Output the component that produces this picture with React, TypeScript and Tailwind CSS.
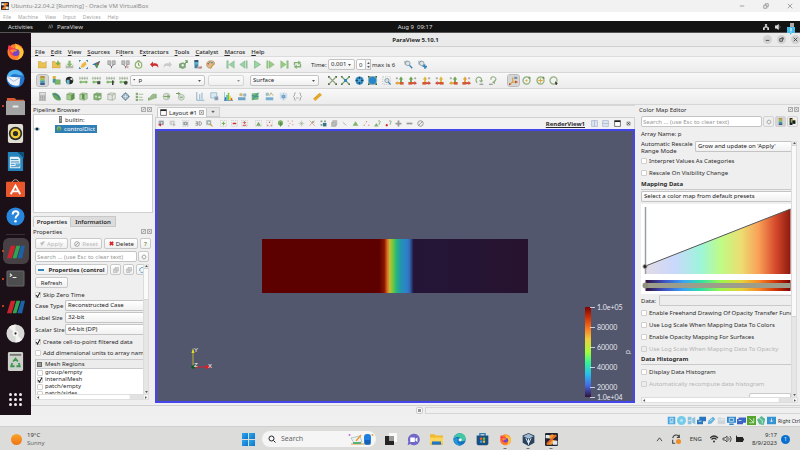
import type { ReactNode } from "react";
import { clsx } from "clsx";

/* ---------- toolbar glyphs, all on a 12 x 12 grid ---------- */

const axisArrow = (up: string, side: string, flip: boolean) => (
  <g transform={flip ? "translate(12 0) scale(-1 1)" : undefined}>
    <path d="M1 3h3M2.500 1.500v3" stroke="#777" strokeWidth=".7" />
    <path d="M8 9V4" stroke={up} strokeWidth="2.500" />
    <path d="M5 4.500h6L8 .5z" fill={up} />
    <path d="M8 9.500H3" stroke={side} strokeWidth="2.500" />
    <path d="M3.500 6.500V12L0 9.500z" fill={side} />
    <path d="M6.500 8h5v3.500h-5z" fill="#d3572f" />
  </g>
);

const cube = (fill: string, extra?: ReactNode) => (
  <>
    <path d="M1 3l4-2 6 1v7l-4 2-6-1z" fill={fill} stroke="#6f8a64" strokeWidth=".6" />
    <path d="M1 3l6 1v7M7 4l4-2" fill="none" stroke="#6f8a64" strokeWidth=".6" />
    {extra}
  </>
);

const rangeRuler = (extra?: ReactNode) => (
  <>
    <path d="M1 1v4M4.300 1v4M7.600 1v4M11 1v4M1 3h10" stroke="#8ea382" strokeWidth=".9" />
    <path d="M0 8l3-2.500V7h6V5.500L12 8l-3 2.500V9H3v1.500z" fill="#79b35f" />
    {extra}
  </>
);

const dashedBox = <path d="M1 1h10v10H1z" fill="none" stroke="#999" strokeWidth=".7" strokeDasharray="1.500 1.500" />;

const magnifier = (
  <>
    <path d="M0 1h5v5H0z" fill="#b9c6cf" />
    <circle cx="5" cy="4.500" r="3" fill="#dbe6ec" stroke="#7c8a92" />
    <path d="M7.300 7L11 11" stroke="#3486bd" strokeWidth="1.800" />
  </>
);

const glyphs: Record<string, ReactNode> = {
  open: <path d="M0 2h4l1 1.500h5l1-2v9H0z" fill="#eac254" stroke="#b98a2c" strokeWidth=".5" />,
  openState: (
    <>
      <path d="M0 2h4l1 1.500h6v7H0z" fill="#eac254" stroke="#b98a2c" strokeWidth=".5" />
      <path d="M7 1h2v3h2L8 7.500 5 4h2z" fill="#6fae51" />
    </>
  ),
  save: (
    <>
      <path d="M1 6v5h10V6l-2 2H3z" fill="#b2b9ae" />
      <path d="M4.500 1h3v4H10L6 9 2 5h2.500z" fill="#83b86b" />
    </>
  ),
  extract: (
    <>
      <path d="M0 0h3L0 3zM12 0v3L9 0zM0 12V9l3 3zM12 12H9l3-3z" fill="#3a84b8" />
      <path d="M2 10l2-5 5-3 1 4-4 4z" fill="#eeb83f" />
    </>
  ),
  catalyst: (
    <>
      <path d="M0 6l11-5-5 10-2-4z" fill="#3774a3" />
      <path d="M4 7l7-6-4 10z" fill="#4d9a52" />
      <path d="M6 5l4-3-2 5z" fill="#c03b3b" />
    </>
  ),
  connect: (
    <>
      <path d="M1 1h4v5H1zM7 1h4v5H7z" fill="#bdbdbd" stroke="#888" strokeWidth=".7" />
      <path d="M3 6l3 3 3-3M6 8v3" stroke="#6d6d6d" fill="none" strokeWidth="1.300" />
    </>
  ),
  disconnect: (
    <>
      <path d="M1 1h4v5H1zM7 1h4v5H7z" fill="#bdbdbd" stroke="#888" strokeWidth=".7" />
      <path d="M3 6l3 3 3-3M6 8v3" stroke="#858585" fill="none" strokeWidth="1.300" />
      <path d="M7 8l3 3M10 8l-3 3" stroke="#c77" />
    </>
  ),
  clock: (
    <>
      <circle cx="6" cy="6.500" r="4.300" fill="#f5f5ee" stroke="#90b874" strokeWidth="1.700" />
      <path d="M6 4v3h2M4.500 1h3" stroke="#6e7c58" fill="none" />
    </>
  ),
  undo: <path d="M0 6l4-4v2.500c5-1 8 1 7 6-1-3-3-3.500-7-2.500v2z" fill="#cf2f2f" />,
  redo: <path d="M12 6L8 2v2.500c-5-1-8 1-7 6 1-3 3-3.500 7-2.500v2z" fill="#c9c9c9" />,
  findData: (
    <>
      <path d="M0 5l5-2 4 2v5l-4 2-5-2z" fill="#7fa77a" />
      <path d="M7 6l4-5M8 1h3v3" stroke="#6da062" strokeWidth="1.500" fill="none" />
      <circle cx="5" cy="7" r="1.600" fill="#e8efe4" />
    </>
  ),
  colorTable: (
    <>
      <path d="M2 0h5v11H2z" fill="#4b7da0" />
      <path d="M2 0h5v3H2z" fill="#3d5570" />
      <path d="M2 3h5v3H2z" fill="#57b8c9" />
      <path d="M6 8h6v4H6z" fill="#c8c8c8" />
      <path d="M7 9l2 2 3-2" stroke="#cc4242" fill="none" />
    </>
  ),
  palette: (
    <>
      <path d="M6 1c8 0 6 6 3 6-2 0 0 4-3 4C-1 11-1 1 6 1z" fill="#dcb88c" stroke="#98703f" strokeWidth=".6" />
      <circle cx="3" cy="5" r="1" fill="#c33" />
      <circle cx="5" cy="3" r="1" fill="#3a7" />
      <circle cx="8" cy="3.500" r="1" fill="#37a" />
      <path d="M6 11l5-7" stroke="#d39b2a" strokeWidth="1.300" />
    </>
  ),
  first: <path d="M1 1h2v10H1zM11 1v10L4 6z" fill="#9ccfa5" stroke="#6faa7c" strokeWidth=".5" />,
  previous: <path d="M8 1v10L1 6zM9.500 1H11v10H9.500z" fill="#9ccfa5" stroke="#6faa7c" strokeWidth=".5" />,
  play: <path d="M2 1v10l8-5z" fill="#9bd6a2" stroke="#6aac77" strokeWidth=".8" />,
  next: <path d="M4 1v10l7-5zM1 1h1.500v10H1z" fill="#97cb86" stroke="#6ba75d" strokeWidth=".5" />,
  last: <path d="M9 1h2v10H9zM1 1v10l7-5z" fill="#97cb86" stroke="#6ba75d" strokeWidth=".5" />,
  loop: (
    <>
      <path d="M2 7V3.500h6M10 5v4H4" fill="none" stroke="#82b173" strokeWidth="1.800" />
      <path d="M7 .5v6l4-3zM5 6v6L1 9z" fill="#82b173" />
    </>
  ),
  zoomIn: magnifier,
  zoomAdd: (
    <>
      {magnifier}
      <path d="M9 5.500v6M6 8.500h6" stroke="#3486bd" strokeWidth="1.600" />
    </>
  ),
  scalarBar: (
    <>
      <path d="M3 0h6v3H3z" fill="#b98f3a" />
      <path d="M3 3h6v3H3z" fill="#a6bd4b" />
      <path d="M3 6h6v3H3z" fill="#3ea0ad" />
      <path d="M3 9h6v3H3z" fill="#3b5a92" />
    </>
  ),
  editColors: (
    <>
      <path d="M1 0h4v4H1z" fill="#d8b23c" />
      <path d="M1 4h4v5H1z" fill="#3f93b8" />
      <path d="M4 5h7v6H4z" fill="#7fb56c" stroke="#5b8a4c" strokeWidth=".5" />
    </>
  ),
  separateColors: (
    <>
      <circle cx="6" cy="6" r="5" fill="#252525" />
      <path d="M2 5h4v6H2z" fill="#67b9c5" />
      <path d="M6 4l4-2v4z" fill="#e9e9e9" />
    </>
  ),
  legendDark: (
    <>
      <path d="M1 0h5v12H1z" fill="#222" />
      <path d="M3 2h4v3H3z" fill="#e0aa37" />
      <path d="M3 5h4v3H3z" fill="#5ab46c" />
      <path d="M6 4h5v6H6z" fill="#161616" />
    </>
  ),
  rescale: rangeRuler(),
  rescaleCustom: rangeRuler(<path d="M7 7h4v4H7z" fill="#4a4a4a" />),
  rescaleTime: rangeRuler(<path d="M8 6h2v6H8z" fill="#404040" />),
  rescaleVisible: rangeRuler(<circle cx="9" cy="9" r="2.500" fill="#3e4b3c" />),
  resetCamera: (
    <>
      <path d="M1 1l10 10M11 1L1 11" stroke="#8fa580" strokeWidth="1.500" />
      <path d="M0 0h3L0 3zM12 0v3L9 0zM0 12V9l3 3zM12 12H9l3-3z" fill="#586b4d" />
    </>
  ),
  zoomToData: (
    <>
      <path d="M1 1l10 10M11 1L1 11" stroke="#79a663" strokeWidth="1.500" />
      <path d="M4 4h4v4H4z" fill="#2f87bd" />
      <path d="M0 0h2v2H0zM10 0h2v2h-2zM0 10h2v2H0zM10 10h2v2h-2z" fill="#586b4d" />
    </>
  ),
  closest: (
    <>
      <circle cx="6" cy="6" r="5.500" fill="#2e84b9" />
      <path d="M1 6h10M6 1v10" stroke="#16425f" strokeWidth="1.200" />
      <path d="M4 4h4v4H4z" fill="#57a4cf" />
    </>
  ),
  closestData: (
    <>
      <path d="M0 0h12v12H0z" fill="#a9b8aa" />
      <circle cx="6" cy="6" r="5" fill="#2586cb" />
      <path d="M0 0h2v2H0zM10 0h2v2h-2zM0 10h2v2H0zM10 10h2v2h-2z" fill="#3c5a41" />
    </>
  ),
  zoomBox: (
    <>
      {dashedBox}
      <circle cx="6.500" cy="6" r="2.800" fill="#cfe0ea" stroke="#7e909b" />
      <path d="M8.500 8l3 3.500" stroke="#3486bd" strokeWidth="1.600" />
    </>
  ),
  plusX: axisArrow("#6da552", "#dfa33d", false),
  minusX: axisArrow("#6da552", "#cf4b35", true),
  plusY: axisArrow("#dfb63d", "#cf4b35", true),
  minusY: axisArrow("#dfb63d", "#cf4b35", false),
  plusZ: axisArrow("#6da552", "#dfa33d", false),
  minusZ: axisArrow("#dfa33d", "#cf4b35", true),
  rotateCw: (
    <>
      <path d="M3 9C-1 5 3 0 7 2c2 1 2 3 1.500 5" fill="none" stroke="#8fae80" strokeWidth="1.500" />
      <path d="M5 6l3.500 3L11 5.500z" fill="#8fae80" />
      <path d="M6 11h5" stroke="#777" strokeWidth="1.200" />
    </>
  ),
  rotateCcw: (
    <>
      <path d="M3 5C1 2 6-1 9 3c1 3-1 4-3 5" fill="none" stroke="#8fae80" strokeWidth="1.500" />
      <path d="M8 5.500v5L4 8.500z" fill="#8fae80" />
      <path d="M0 11h5" stroke="#777" strokeWidth="1.200" />
    </>
  ),
  showAxes: (
    <>
      <path d="M5 9V2M5 8h6M5 8l-4 3" stroke="#d5a031" strokeWidth="1.500" />
      <path d="M8 6l4 2-4 2z" fill="#c84b3b" />
      <path d="M7 1h4v3H7z" fill="#7d8cab" />
      <path d="M0 9l3 3H0z" fill="#c84b3b" />
    </>
  ),
  centerShow: (
    <>
      <circle cx="6" cy="6" r="4.700" fill="none" stroke="#8fb07c" strokeWidth="1.700" />
      <circle cx="6" cy="6" r="1.500" fill="#d6b04b" />
      <path d="M9 0l3 3-3 1z" fill="#6b9257" />
    </>
  ),
  centerReset: (
    <>
      <circle cx="6" cy="6" r="4.700" fill="none" stroke="#8fb07c" strokeWidth="1.700" />
      <path d="M6 3v6M3 6h6" stroke="#dfaa3a" strokeWidth="1.600" />
      <path d="M9 0l3 3-3 1z" fill="#6b9257" />
    </>
  ),
  centerPick: (
    <>
      <circle cx="6" cy="6" r="4.700" fill="none" stroke="#8fb07c" strokeWidth="1.700" />
      <path d="M8 7l4 3-2 .3.500 1.700H9z" fill="#222" />
    </>
  ),
  calculator: (
    <>
      <path d="M2 0h8v12H2z" fill="#c3c3c3" stroke="#9c9c9c" strokeWidth=".6" />
      <path d="M3 1.500h6v2H3z" fill="#e4e9e4" />
      <path d="M3.500 5v6M6 5v6M8.500 5v6" stroke="#8a8a8a" strokeDasharray="1.200 .8" />
    </>
  ),
  contour: (
    <>
      <path d="M0 2c3-3 11 0 12 8-1 3-10 2-12-8z" fill="#6aa75e" />
      <path d="M2 3c4 0 7 3 8 6" fill="none" stroke="#417aa6" strokeWidth="1.600" />
    </>
  ),
  clip: cube("#a3cb8c", <path d="M7 4l4-2v7l-4 2z" fill="#5d924f" />),
  slice: cube("#b5d3a5", <path d="M4 2l3 1v7l-3-1z" fill="#5b9853" />),
  threshold: cube("#83b573", <path d="M3 5h2v2H3zM7 6h3v2H7z" fill="#e9f1e4" />),
  extractSubset: cube("#e4e4e4"),
  glyph: (
    <>
      <circle cx="6" cy="6" r="4" fill="#9fb8c7" stroke="#75909f" />
      <path d="M6 0l2 2.500H4zM6 12l2-2.500H4zM0 6l2.500-2v4zM12 6L9.500 4v4z" fill="#6b8799" />
      <path d="M6 3v6M3 6h6" stroke="#dce8ee" />
    </>
  ),
  streamTracer: (
    <>
      <path d="M1 1h3v3H1zM1 5h3v3H1zM1 9h3v3H1z" fill="#86ab76" />
      <path d="M5 3h6M5 7h5M5 10.500h6" stroke="#a9c19e" strokeWidth="1.500" />
    </>
  ),
  warp: <path d="M0 8c4 1 3-4 7-5h4v5c-4 0-5 2-11 3z" fill="#9dbc8e" stroke="#6f9660" strokeWidth=".7" />,
  group: (
    <>
      <circle cx="6" cy="6" r="4.500" fill="#d9e0d6" stroke="#a7b5a1" />
      <path d="M2 6h8M7 4l3 2-3 2" stroke="#7ba368" fill="none" strokeWidth="1.300" />
    </>
  ),
  extractLevel: (
    <>
      <circle cx="7" cy="7" r="4" fill="#d9e0d6" stroke="#a7b5a1" />
      <path d="M0 2h5M3 0l2 2-2 2M5 7h4" stroke="#6d9a59" fill="none" strokeWidth="1.200" />
    </>
  ),
  plotLine: <path d="M1 0v11h10M5 3v7M8 1v9" fill="none" stroke="#7ba5c6" strokeWidth="1.100" />,
  plotSelection: (
    <>
      <path d="M1 1h8v7H1z" fill="#dbe9f1" stroke="#7ca3bc" strokeWidth=".8" />
      <path d="M6 6h5v5H6z" fill="#7ea9c4" />
      <path d="M8 10l2-3" stroke="#d56" />
    </>
  ),
  histogram: (
    <>
      <path d="M0 12V0M0 11.500h12" stroke="#3974a8" />
      <path d="M1 7h2v4H1z" fill="#3468c9" />
      <path d="M3 4h2v7H3z" fill="#34b5b0" />
      <path d="M5 1h2v10H5z" fill="#7fc73c" />
      <path d="M7 5h2v6H7z" fill="#f1d52e" />
      <path d="M9 8h2v3H9z" fill="#e2602d" />
    </>
  ),
  inspect: (
    <>
      <path d="M0 7h10v4H0z" fill="#6fa3c4" />
      <circle cx="4" cy="3.500" r="2.300" fill="#cdbb74" />
      <path d="M7 2h4v4H7z" fill="#8db2c7" />
    </>
  ),
  probe: (
    <>
      <path d="M1 2l9-1v9l-9 1z" fill="#6fb878" />
      <path d="M2 10l8-9M1 5l9 1" stroke="#2b7fa8" />
    </>
  ),
  sample: (
    <>
      <path d="M1 7h10v4H1z" fill="#77b0ce" />
      <path d="M1 1h4v4H1z" fill="#9bb" />
      <path d="M6 5l2-4 3 4" stroke="#b99a59" fill="none" />
    </>
  ),
  ambient: (
    <>
      <path d="M1 1h10v7l-5 4-5-4z" fill="#d7e4ee" />
      <circle cx="6" cy="6" r="2.500" fill="#5d96c1" />
      <path d="M6 1v10M2 4l8 4M10 4L2 8" stroke="#8eb4d0" strokeWidth=".7" />
    </>
  ),
  braces: (
    <path d="M3.500 1C1 1 3 5 .5 6 3 7 1 11 3.500 11M8.500 1c2.500 0 .5 4 3 5-2.500 1-.5 5-3 5M4 8h1M5.700 8h1M7.300 8h1" fill="none" stroke="#858585" />
  ),
  ruler: (
    <>
      <path d="M0 9l9-8 3 3-9 8z" fill="#e5aa2c" />
      <path d="M3 7l1 1M5 5l1 1M7 3l1 1" stroke="#8b641b" strokeWidth=".7" />
    </>
  ),
  camUndo: (
    <>
      <path d="M1 1h9v8H1z" fill="#a8adb5" />
      <circle cx="6" cy="5" r="2.500" fill="#d6e0e6" stroke="#66727a" />
      <path d="M0 8l5-2v5z" fill="#d02c2c" />
    </>
  ),
  camRedo: (
    <>
      <path d="M1 1h9v8H1z" fill="#d3d3d3" />
      <circle cx="6" cy="5" r="2.500" fill="#eee" stroke="#aaa" />
      <path d="M12 8L7 6v5z" fill="#b9b9b9" />
    </>
  ),
  camera: (
    <>
      {dashedBox}
      <path d="M2 3h8v6H2z" fill="#a3abae" />
      <circle cx="6" cy="6" r="2" fill="#e2e8ea" stroke="#68757c" />
    </>
  ),
  threeD: <path d="M1 3h3.500v6H1M1 6h3M7 3v6h2.500L11 7V5L9.500 3z" fill="none" stroke="#777" strokeWidth="1.200" />,
  zoomView: (
    <>
      <path d="M0 0h9v9H0z" fill="#bfcace" />
      <circle cx="5" cy="4.500" r="3" fill="#e0e6e2" stroke="#75857c" />
      <path d="M7 7l4 4" stroke="#c8962a" strokeWidth="1.800" />
    </>
  ),
  selAdd: (
    <>
      {dashedBox}
      <path d="M6 3v6M3 6h6" stroke="#74b45a" strokeWidth="2" />
    </>
  ),
  selRemove: (
    <>
      {dashedBox}
      <path d="M3 6h6" stroke="#d22f2f" strokeWidth="2.500" />
    </>
  ),
  selToggle: (
    <>
      {dashedBox}
      <path d="M6 2v5M3 4.500h6" stroke="#b3684e" strokeWidth="1.500" />
      <path d="M3 9h6" stroke="#d22f2f" strokeWidth="1.500" />
    </>
  ),
  cells: (
    <>
      {dashedBox}
      <path d="M2 10l4-7 4 7z" fill="#78a865" />
    </>
  ),
  points: (
    <>
      {dashedBox}
      <path d="M5 3h2v2H5zM2 8h2v2H2zM8 8h2v2H8z" fill="#c65b4a" />
    </>
  ),
  polyCells: (
    <>
      <circle cx="6" cy="5" r="4.500" fill="#7fb566" />
      <path d="M4 6l2-3 3 4-3 5z" fill="#5a9146" />
    </>
  ),
  polyPoints: <path d="M1 1h2v2H1zM8 1h2v2H8zM4 5h2v2H4zM9 7h2v2H9zM2 9h2v2H2z" fill="#d9a29a" />,
  frustum: <path d="M6 1v10M1 6h10M3 3l6 6M9 3L3 9" stroke="#a5b79b" />,
  blocks: (
    <>
      <path d="M1 1l9 9M9 1L1 10" stroke="#c2796b" />
      <path d="M5 2h4v3H5z" fill="#9eb48e" />
    </>
  ),
  blocksBlue: (
    <>
      <path d="M1 1h3v3H1zM7 1h3v3H7zM1 7h3v3H1z" fill="#7c9b8b" />
      <path d="M5 5h6v6H5z" fill="#3b718c" />
    </>
  ),
  interactive: <path d="M3 1h7v8H3zM1 4h7v7H1z" fill="#c6c6c6" stroke="#8f8f8f" strokeWidth=".7" />,
  hoverLine: <path d="M3 4l6 5" stroke="#aaa" strokeWidth="1.500" />,
  hoverCell: <path d="M1 10l5-8 5 8z" fill="#83b36f" />,
  hoverPoint: <path d="M5 2h2v2H5zM1 8h2v2H1zM9 8h2v2H9zM4 6h1v1H4z" fill="#cf7564" />,
  queryCell: (
    <>
      <path d="M0 11l4-6 4 6z" fill="#83b36f" />
      <path d="M7 2c4-2 5 2 2 3v3" fill="none" stroke="#83a06f" strokeWidth="1.500" />
    </>
  ),
  queryPoint: (
    <>
      <circle cx="3" cy="9" r="2" fill="#d12f2f" />
      <path d="M7 2c4-2 5 2 2 3v3" fill="none" stroke="#83a06f" strokeWidth="1.500" />
    </>
  ),
  grow: <path d="M6 1v10M1 6h10" stroke="#9a9a9a" strokeWidth="3" />,
  shrink: <path d="M1 6h10" stroke="#9a9a9a" strokeWidth="3" />,
  forbid: (
    <>
      <circle cx="6" cy="6" r="4.700" fill="none" stroke="#8e8e8e" strokeWidth="1.500" />
      <path d="M9 3L3 9" stroke="#8e8e8e" strokeWidth="1.500" />
    </>
  ),
  splitH: <path d="M1 1h10v10H1zM6 1v10" fill="#dde5f0" stroke="#9aa9c2" />,
  splitV: <path d="M1 1h10v10H1zM1 6h10" fill="#dde5f0" stroke="#9aa9c2" />,
  maximize: (
    <>
      <path d="M1 1h10v10H1z" fill="#fff" stroke="#222" />
      <path d="M1 1h10v2.500H1z" fill="#222" />
    </>
  ),
  close: (
    <>
      <circle cx="6" cy="6" r="4.500" fill="#c2c2c2" />
      <path d="M4 4l4 4M8 4L4 8" stroke="#444" strokeWidth="1.300" />
    </>
  ),
  dockFloat: <path d="M1 1h10v10H1zM3.500 8.500l5-5" fill="#e5e5e5" stroke="#777" strokeWidth="1.400" />,
  dockClose: <path d="M1 1h10v10H1zM4 4l4 4M8 4L4 8" fill="#e5e5e5" stroke="#777" strokeWidth="1.400" />,
  gear: (
    <>
      <circle cx="6" cy="6" r="3.500" fill="none" stroke="#b5b5b5" strokeWidth="2" />
      <path d="M6 0v12M0 6h12M2 2l8 8M10 2l-8 8" stroke="#b5b5b5" strokeDasharray="2 8" />
    </>
  ),
  copy: <path d="M4 1h7v7H4zM1 4h7v7H1z" fill="#ddd" stroke="#a5a5a5" />,
  reload: <path d="M9 2C4-1 0 4 2 8M3 10c5 3 9-2 7-6" fill="none" stroke="#4a97c5" strokeWidth="2" />,
};

function Glyph({ name, className = "size-[9px]" }: { name: string; className?: string }) {
  return (
    <svg viewBox="0 0 12 12" className={clsx("block shrink-0", className)} aria-hidden="true">
      {glyphs[name]}
    </svg>
  );
}

type ToolGroupProps = { names: string[]; className: string; pressed?: string; small?: boolean };

function ToolGroup({ names, className, pressed, small }: ToolGroupProps) {
  return (
    <div className={clsx("flex shrink-0 items-center justify-between", className)}>
      {names.map((name) => (
        <button
          key={name}
          aria-label={name}
          className={clsx(
            "grid h-[11px] w-[11px] place-items-center",
            name === pressed && "rounded-xs bg-[#d6d6d6] outline outline-[#bbb]",
          )}
        >
          <Glyph name={name} className={small ? "size-[7px]" : "size-[9px]"} />
        </button>
      ))}
    </div>
  );
}

/* ---------- form controls ---------- */

function Dropdown({ label, value, className, bare }: { label: string; value: string; className?: string; bare?: boolean }) {
  return (
    <div className={clsx("relative h-[11px]", className)}>
      <select
        aria-label={label}
        className={clsx(
          "block h-full w-full appearance-none border border-[#c4c4c4] bg-linear-to-b from-white to-[#f1f1f1] pl-[2px] text-[6px] leading-[9px] text-[#222]",
          bare ? "rounded-l-xs border-r-0" : "rounded-xs",
        )}
      >
        <option>{value}</option>
      </select>
      {!bare && (
        <svg viewBox="0 0 6 4" className="pointer-events-none absolute top-1/2 right-[4px] h-[2px] w-[3px] -translate-y-1/2">
          <path d="M0 0h6L3 4z" fill="#555" />
        </svg>
      )}
    </div>
  );
}

function Check({ label, checked, disabled, className }: { label: string; checked?: boolean; disabled?: boolean; className?: string }) {
  return (
    <label className={clsx("flex shrink-0 items-center gap-[2px] whitespace-nowrap", disabled && "text-[#b5b5b5]", className)}>
      <span className="relative size-[6px] shrink-0">
        <input
          type="checkbox"
          defaultChecked={checked}
          disabled={disabled}
          className="peer block size-[6px] appearance-none rounded-[1px] border border-[#cfcfcf] bg-white disabled:bg-[#ededed]"
        />
        <svg viewBox="0 0 6 6" className="pointer-events-none absolute inset-0 hidden size-[6px] peer-checked:block">
          <path d="M1 3l1.500 2L5 .5" fill="none" stroke="#222" strokeWidth="1.100" />
        </svg>
      </span>
      {label}
    </label>
  );
}

function PanelHeader({ title }: { title: string }) {
  return (
    <div className="flex h-[9px] shrink-0 items-center justify-between pr-px">
      <h2>{title}</h2>
      <div className="flex gap-px">
        <button aria-label={`Float ${title}`}><Glyph name="dockFloat" className="size-[5px]" /></button>
        <button aria-label={`Close ${title}`}><Glyph name="dockClose" className="size-[5px]" /></button>
      </div>
    </div>
  );
}

function VScroll({ thumb }: { thumb: string }) {
  return (
    <div className="flex w-[6px] shrink-0 flex-col items-center border-x border-[#dcdcdc] bg-[#e6e6e6]">
      <svg viewBox="0 0 4 3" className="my-px h-[2px] w-[3px]"><path d="M0 3h4L2 0z" fill="#555" /></svg>
      <div className={clsx("w-full border-y border-[#d5d5d5] bg-[#fafafa]", thumb)} />
      <svg viewBox="0 0 4 3" className="mt-auto mb-px h-[2px] w-[3px]"><path d="M0 0h4L2 3z" fill="#555" /></svg>
    </div>
  );
}

function HScroll() {
  return (
    <div className="flex h-[6px] shrink-0 items-center gap-px border border-[#dedede] bg-[#f4f4f4] px-px">
      <svg viewBox="0 0 3 4" className="h-[3px] w-[2px]"><path d="M3 0v4L0 2z" fill="#555" /></svg>
      <div className="h-full grow bg-white" />
      <div className="h-full w-[14px] bg-[#e2e2e2]" />
      <svg viewBox="0 0 3 4" className="h-[3px] w-[2px]"><path d="M0 0v4l3-2z" fill="#555" /></svg>
    </div>
  );
}

/* ---------- Ubuntu dock ---------- */

const paraviewMark = (
  <>
    <path d="M5 4h5L6 17H1z" fill="#c9252f" />
    <path d="M11 4h4l-4 13H7z" fill="#2da552" />
    <path d="M16 4h4l-3 13h-5z" fill="#1c62a8" />
  </>
);

const firefoxMark = (
  <>
    <circle cx="10" cy="10.500" r="8.500" fill="#ff7a2f" />
    <path d="M10 1c1 3 8 4 8.500 9 0 6-5 9-8.500 9 6-3 5-9 0-12z" fill="#ffc534" />
    <path d="M2 6l1-3 3 3 4 1c3 1 4 3 3 5-2 4-9 3-9-2z" fill="#f9394f" />
    <circle cx="10.500" cy="11" r="3.700" fill="#7447c9" />
    <path d="M4 9c3-3 5 0 8-1-1 3-4 1-5 4z" fill="#ff8b32" />
  </>
);

const dockTop: { name: string; open?: boolean; art: ReactNode }[] = [
  { name: "Firefox", art: firefoxMark },
  {
    name: "Thunderbird",
    art: (
      <>
        <circle cx="10" cy="10" r="9.500" fill="#2474c9" />
        <path d="M1 8c2-9 14-9 17-1l-5-1c-5-2-8 0-9 3z" fill="#4eb4f2" />
        <path d="M1 8l14 1-1 8c-6 2-13-1-13-9z" fill="#eef3fa" />
        <path d="M1 8l7 5 7-4" fill="none" stroke="#a5b8cf" />
      </>
    ),
  },
  {
    name: "Files",
    open: true,
    art: (
      <>
        <path d="M1 1h8l2 2h8v5H1z" fill="#d85a2c" />
        <path d="M0 4h20v15H0z" fill="#a4a4a4" />
        <path d="M7 9h6v2H7z" fill="#eee" />
      </>
    ),
  },
  {
    name: "Rhythmbox",
    art: (
      <>
        <rect x="2" y="0" width="16" height="20" rx="2" fill="#e2ddd2" />
        <circle cx="10" cy="10" r="7" fill="#2c2c2c" />
        <circle cx="10" cy="10" r="4" fill="none" stroke="#f3cc31" strokeWidth="2.500" />
      </>
    ),
  },
  {
    name: "Writer",
    art: (
      <>
        <path d="M2 0h11l5 5v15H2z" fill="#2684bd" />
        <path d="M12 0h7v7z" fill="#0f4e7b" />
        <path d="M4 5h9l2 2v10H4z" fill="#e9f3f8" />
        <path d="M5 8h8M5 10.500h9M5 13h4M5 15.500h9" stroke="#2b86ba" />
        <path d="M10 12h5v3h-5z" fill="#5fa9d3" />
      </>
    ),
  },
  {
    name: "Software",
    art: (
      <>
        <path d="M6 6c0-7 8-7 8 0" fill="none" stroke="#c4a191" />
        <rect x="0" y="3" width="20" height="16" rx="1" fill="#e9562b" />
        <path d="M5 16l5-9 5 9M6 13h8" fill="none" stroke="#fff" strokeWidth="2" />
      </>
    ),
  },
  {
    name: "Help",
    art: (
      <>
        <circle cx="10" cy="10" r="9.500" fill="#2786dc" />
        <path d="M7 8c0-5 7-4 6-1 0 2-3 2-3 5" fill="none" stroke="#fff" strokeWidth="2" />
        <circle cx="10" cy="15" r="1.300" fill="#fff" />
      </>
    ),
  },
];

const dockBottom: { name: string; open?: boolean; active?: boolean; art: ReactNode }[] = [
  { name: "ParaView", open: true, active: true, art: paraviewMark },
  {
    name: "Terminal",
    open: true,
    art: (
      <>
        <rect x="1" y="2" width="18" height="16" rx="1" fill="#4d4d4d" stroke="#777" strokeWidth=".8" />
        <path d="M4 5l2 1.500L4 8M7 9h4" fill="none" stroke="#eee" strokeWidth="1.100" />
      </>
    ),
  },
  { name: "ParaView window", open: true, art: paraviewMark },
  {
    name: "Disc",
    art: (
      <>
        <circle cx="10" cy="10" r="9.500" fill="#d8d8d6" />
        <path d="M10 10L3 3.500A9.500 9.500 0 0 1 10 .5zM10 10l7 6.500a9.500 9.500 0 0 1-7 3z" fill="#f2f2f0" />
        <circle cx="10" cy="10" r="3" fill="#fafafa" />
        <circle cx="10" cy="10" r="1.200" fill="#333" />
      </>
    ),
  },
  {
    name: "Trash",
    art: (
      <>
        <rect x="2" y="0" width="16" height="20" rx="1.500" fill="#cdd0cb" />
        <path d="M4 2h12v2H4z" fill="#777" />
        <path d="M7.500 10L10 7l2.500 3M13.500 11.500L14.500 15H11M9 15H5.500l1-3.500" fill="none" stroke="#3d9750" strokeWidth="1.900" />
      </>
    ),
  },
];

function DockItem({ name, open, active, art }: { name: string; open?: boolean; active?: boolean; art: ReactNode }) {
  return (
    <button aria-label={name} className="relative grid h-[26px] w-full place-items-center">
      {open && <span className="absolute top-1/2 left-[2px] size-[2px] -translate-y-1/2 rounded-full bg-[#e95420]" />}
      <span className={clsx("grid size-[26px] place-items-center rounded-md", active && "bg-[#474146]")}>
        <svg viewBox="0 0 20 20" className="size-[19px]">{art}</svg>
      </span>
    </button>
  );
}

function Dock() {
  return (
    <nav className="flex w-[31px] shrink-0 flex-col bg-[#1c1018] pt-[5px]">
      <div className="flex h-[191px] flex-col justify-between">
        {dockTop.map((d) => <DockItem key={d.name} {...d} />)}
      </div>
      <div className="mx-[6px] mt-[5px] mb-[3px] h-px bg-[#3a2f36]" />
      <div className="flex h-[136px] flex-col justify-between">
        {dockBottom.map((d) => <DockItem key={d.name} {...d} />)}
      </div>
      <button aria-label="Show applications" className="mx-auto mt-auto mb-[9px] grid grid-cols-3 gap-[2px]">
        {Array.from({ length: 9 }, (_, i) => <span key={i} className="size-[3px] rounded-full bg-[#ededed]" />)}
      </button>
    </nav>
  );
}

/* ---------- menus and toolbars ---------- */

const appMenu = ["|File", "|Edit", "|View", "|Sources", "Fi|lters", "E|xtractors", "|Tools", "|Catalyst", "|Macros", "|Help"];

function Toolbars() {
  const bar = "flex h-[16px] shrink-0 items-center overflow-hidden border-b border-[#d6d6d6] bg-linear-to-b from-[#f8f8f8] to-[#ececec] pl-[6px]";
  return (
    <div>
      <div className="flex h-[10px] items-center gap-[6px] border-b border-[#dcdcdc] pl-[4px] font-medium">
        {appMenu.map((item) => {
          const [before, rest] = item.split("|");
          return (
            <button key={item}>
              {before}<u>{rest[0]}</u>{rest.slice(1)}
            </button>
          );
        })}
      </div>
      <div className={bar}>
        <ToolGroup className="w-[65px]" names={["open", "openState", "save", "extract", "catalyst"]} />
        <ToolGroup className="ml-[4px] w-[38px]" names={["connect", "disconnect", "clock"]} />
        <ToolGroup className="ml-[5px] w-[24px]" names={["undo", "redo"]} />
        <ToolGroup className="ml-[5px] w-[38px]" names={["findData", "colorTable", "palette"]} />
        <ToolGroup className="ml-[9px] w-[78px]" names={["first", "previous", "play", "next", "last", "loop"]} />
        <span className="ml-[8px] w-[17px]">Time:</span>
        <Dropdown label="Time" value="0.001" className="w-[27px]" />
        <input aria-label="Time step" type="text" defaultValue="0" className="ml-px h-[11px] w-[10px] rounded-l-xs border border-[#c4c4c4] bg-white pl-[2px]" />
        <div className="flex h-[11px] w-[5px] flex-col items-center justify-center gap-[2px] border border-l-0 border-[#c4c4c4]">
          <svg viewBox="0 0 4 3" className="h-[2px] w-[3px]"><path d="M0 3h4L2 0z" fill="#555" /></svg>
          <svg viewBox="0 0 4 3" className="h-[2px] w-[3px]"><path d="M0 0h4L2 3z" fill="#555" /></svg>
        </div>
        <span className="ml-px w-[31px] whitespace-nowrap">max is 6</span>
        <ToolGroup className="w-[25px]" names={["zoomIn", "zoomAdd"]} />
      </div>
      <div className={bar}>
        <ToolGroup
          className="w-[92px]"
          names={["scalarBar", "editColors", "separateColors", "rescale", "rescaleCustom", "rescaleTime", "rescaleVisible"]}
          pressed="scalarBar"
        />
        <Dropdown label="Color by" value="•&nbsp; p" className="ml-px w-[75px]" />
        <Dropdown label="Component" value="" className="ml-[3px] w-[36px] opacity-60" />
        <Dropdown label="Representation" value="Surface" className="ml-[6px] w-[69px]" />
        <ToolGroup
          className="ml-[8px] w-[172px]"
          names={["resetCamera", "zoomToData", "closest", "closestData", "zoomBox", "plusX", "minusX", "plusY", "minusY", "plusZ", "minusZ", "rotateCw", "rotateCcw"]}
        />
        <ToolGroup className="ml-[9px] w-[51px]" names={["showAxes", "centerShow", "centerReset", "centerPick"]} pressed="showAxes" />
      </div>
      <div className={bar}>
        <ToolGroup
          className="w-[149px]"
          names={["calculator", "contour", "clip", "slice", "threshold", "extractSubset", "glyph", "streamTracer", "warp", "group", "extractLevel"]}
        />
        <ToolGroup
          className="ml-[9px] w-[108px]"
          names={["plotLine", "plotSelection", "histogram", "inspect", "probe", "sample", "ambient", "braces"]}
        />
        <ToolGroup className="ml-[9px] w-[11px]" names={["ruler"]} />
      </div>
    </div>
  );
}

/* ---------- left column ---------- */

function PipelineBrowser() {
  return (
    <>
      <PanelHeader title="Pipeline Browser" />
      <ul className="min-h-[98px] grow border border-[#cfcfcf] bg-white">
        <li className="flex h-[9px] items-center gap-[2px] pl-[24px]">
          <svg viewBox="0 0 6 10" className="h-[7px] w-[5px]">
            <path d="M1 0h4v10H1z" fill="#666" />
            <path d="M2 2h2M2 4h2M2 7h2" stroke="#eee" />
          </svg>
          builtin:
        </li>
        <li className="flex h-[9px] items-center">
          <svg viewBox="0 0 12 8" className="h-[4px] w-[6px]">
            <path d="M0 4c3-5 9-5 12 0-3 5-9 5-12 0z" fill="#9ab6c6" />
            <circle cx="6" cy="4" r="2.500" fill="#123" />
          </svg>
          <span className="ml-[15px] flex h-[8px] items-center gap-[2px] bg-[#2f7eb5] pr-[2px] pl-px text-white">
            <Glyph name="polyCells" className="size-[6px]" />
            controlDict
          </span>
        </li>
      </ul>
    </>
  );
}

function FormRow({ label, value }: { label: string; value: string }) {
  return (
    <div className="flex shrink-0 items-center">
      <span className="w-[30px] shrink-0 whitespace-nowrap">{label}</span>
      <Dropdown label={label} value={value} bare className="grow" />
    </div>
  );
}

const meshRegions = [
  { name: "group/empty", on: false },
  { name: "internalMesh", on: true },
  { name: "patch/empty", on: false },
  { name: "patch/sides", on: false },
];

function PropertiesPanel() {
  const button = "flex h-[11px] items-center justify-center gap-[2px] rounded-xs border border-[#c9c9c9] bg-linear-to-b from-white to-[#f0f0f0]";
  return (
    <>
      <div className="mt-[3px] flex h-[11px] shrink-0 font-semibold" role="tablist">
        <button role="tab" aria-selected="true" className="w-[38px] rounded-t-xs border border-b-0 border-[#c8c8c8] bg-[#f3f3f3]">Properties</button>
        <button role="tab" className="w-[45px] border border-l-0 border-[#c8c8c8] bg-[#dcdcdc]">Information</button>
      </div>
      <PanelHeader title="Properties" />
      <div className="mt-[2px] flex gap-[2px] px-[2px]">
        <button disabled className={clsx(button, "w-[33px] text-[#b9b9b9]")}>
          <svg viewBox="0 0 8 8" className="size-[5px]"><path d="M0 3l4-2 4-1-2 4-3 4z" fill="#c2c2c2" /></svg>
          Apply
        </button>
        <button disabled className={clsx(button, "w-[33px] text-[#b9b9b9]")}>
          <Glyph name="forbid" className="size-[6px]" />
          Reset
        </button>
        <button className={clsx(button, "w-[34px]")}>
          <svg viewBox="0 0 6 6" className="size-[5px]"><path d="M1 1l4 4M5 1L1 5" stroke="#d82424" strokeWidth="2" /></svg>
          Delete
        </button>
        <button className={clsx(button, "w-[11px] font-bold text-[#7d9a5b]")}>?</button>
      </div>
      <div className="mt-[2px] flex gap-px pr-[4px] pl-[2px]">
        <input type="search" aria-label="Search properties" placeholder="Search ... (use Esc to clear text)" className="h-[11px] min-w-0 grow rounded-xs border border-[#c4c4c4] bg-white pl-px placeholder:text-[#999]" />
        <button aria-label="Advanced" className={clsx(button, "w-[11px]")}><Glyph name="gear" className="size-[6px]" /></button>
      </div>
      <div className="mt-[2px] flex h-[130px] shrink-0 pr-[4px] pl-[2px]">
        <div className="flex min-w-0 grow flex-col overflow-hidden">
          <div className="flex shrink-0 gap-[2px]">
            <button className={clsx(button, "w-[73px] shrink-0 gap-[4px] font-bold")}>
              <span className="h-[2px] w-[6px] bg-[#2f86b8]" />
              Properties (control
            </button>
            <button aria-label="Copy" className={clsx(button, "w-[11px] shrink-0")}><Glyph name="copy" className="size-[6px]" /></button>
            <button aria-label="Paste" className={clsx(button, "w-[11px] shrink-0")}><Glyph name="copy" className="size-[6px]" /></button>
            <button aria-label="Restore defaults" className={clsx(button, "w-[11px] shrink-0")}><Glyph name="reload" className="size-[6px]" /></button>
          </div>
          <button className={clsx(button, "mt-[2px] w-[33px] shrink-0")}>Refresh</button>
          <Check label="Skip Zero Time" checked className="mt-[2px] h-[10px]" />
          <div className="flex shrink-0 flex-col gap-px">
            <FormRow label="Case Type" value="Reconstructed Case" />
            <FormRow label="Label Size" value="32-bit" />
            <FormRow label="Scalar Size" value="64-bit (DP)" />
          </div>
          <Check label="Create cell-to-point filtered data" checked className="mt-px h-[11px]" />
          <Check label="Add dimensional units to array names" className="h-[11px]" />
          <div className="mt-px flex shrink-0 flex-col border border-r-0 border-[#cacaca] bg-white">
            <div className="flex h-[9px] items-center gap-[3px] border-b border-[#cacaca] bg-[#ececec] pl-px">
              <span className="size-[5px] border border-[#666] bg-[#999]" />
              Mesh Regions
            </div>
            {meshRegions.map((r) => (
              <Check key={r.name} label={r.name} checked={r.on} className="h-[7px] pl-px leading-[7px]" />
            ))}
          </div>
        </div>
        <VScroll thumb="h-[32px]" />
      </div>
      <div className="pr-[4px] pb-[3px] pl-[2px]"><HScroll /></div>
    </>
  );
}

/* ---------- render view ---------- */

function Legend() {
  const ticks = [
    { text: "1.0e+05", top: "top-[-4px]" },
    { text: "80000", top: "top-[16px]" },
    { text: "60000", top: "top-[36px]" },
    { text: "40000", top: "top-[56px]" },
    { text: "20000", top: "top-[76px]" },
    { text: "1.0e+04", top: "top-[86px]" },
  ];
  return (
    <div className="absolute right-[2px] bottom-[4px] h-[90px] w-[46px] font-['Lato','Noto_Sans',sans-serif] text-[7px] text-[#e8e8ee]">
      <div className="h-full w-[6px] bg-[linear-gradient(#7a0403,#d23105_12%,#fb8022_25%,#edd03a_36%,#a2fc3c_50%,#31f299_62%,#28bceb_75%,#466be3_87%,#30123b)]" />
      {ticks.map((t) => (
        <div key={t.text} className={clsx("absolute left-[5px] flex h-[8px] items-center gap-[2px] leading-[8px]", t.top)}>
          <span className="h-px w-[5px] bg-white/70" />
          {t.text}
        </div>
      ))}
      <span className="absolute top-[41px] right-[2px] -rotate-90 leading-[8px]">p</span>
    </div>
  );
}

function RenderView() {
  return (
    <main className="flex min-w-0 grow flex-col">
      <div className="flex h-[12px] shrink-0 items-end border-t border-[#d6d6d6] pl-[2px]">
        <div className="flex h-[10px] items-center gap-[2px] rounded-t-xs border border-b-0 border-[#c9c9c9] bg-[#fafafa] px-[2px]">
          <Glyph name="maximize" className="size-[7px]" />
          Layout #1
          <button aria-label="Close layout"><Glyph name="dockClose" className="size-[5px]" /></button>
        </div>
        <button className="h-[10px] w-[13px] border border-l-0 border-[#cfcfcf] bg-[#e6e6e6] font-bold">+</button>
      </div>
      <div className="flex h-[12px] shrink-0 items-center overflow-hidden border-x border-t border-[#d0d0d0] bg-[#f2f2f2]">
        <ToolGroup small className="w-[22px]" names={["camUndo", "camRedo"]} />
        <ToolGroup small className="ml-[2px] w-[11px]" names={["camera"]} />
        <ToolGroup small className="ml-[2px] w-[22px]" names={["threeD", "zoomView"]} />
        <ToolGroup small className="ml-[3px] w-[32px]" names={["selAdd", "selRemove", "selToggle"]} />
        <ToolGroup
          small
          className="ml-[3px] w-[173px]"
          names={["cells", "points", "polyCells", "polyPoints", "frustum", "blocks", "blocksBlue", "interactive", "hoverLine", "hoverCell", "hoverPoint", "queryCell", "queryPoint", "grow", "shrink", "forbid"]}
        />
        <button className="mr-[4px] ml-auto font-bold underline">RenderView1</button>
        <ToolGroup small className="w-[45px]" names={["splitH", "splitV", "maximize", "close"]} />
      </div>
      <div className="relative flex grow items-center justify-center border-2 border-[#4545ec] bg-[#52576e]">
        <div className="h-[54px] w-[56%] bg-[linear-gradient(90deg,#5c0000_44%,#8b1500_46%,#d8651d_47%,#c9b93a_48%,#7cc93a_49%,#28b878_50.500%,#2296b0_52%,#2d80c8_54.500%,#3169b8_55.500%,#241538_57%,#27132f)]" />
        <svg viewBox="0 0 24 24" className="absolute bottom-[30px] left-[32px] size-[24px]">
          <path d="M4 19V4" stroke="#98933f" strokeWidth="1.500" />
          <path d="M2.500 6L4 1l1.500 5z" fill="#e6e11b" />
          <path d="M4 20h15" stroke="#c72632" strokeWidth="1.200" />
          <path d="M17 18v4l5-2z" fill="#e81818" />
          <circle cx="4" cy="20" r="1.800" fill="#0b5a1b" />
          <g fill="#fff" fontSize="6" fontFamily="Liberation Sans">
            <text x="5" y="5">Y</text>
            <text x="5" y="20">Z</text>
            <text x="19" y="21">X</text>
          </g>
        </svg>
        <Legend />
      </div>
    </main>
  );
}

/* ---------- right column ---------- */

function OpacityEditor() {
  return (
    <svg viewBox="0 0 149 90" className="mt-[2px] block h-[90px] w-full shrink-0 bg-white">
      <defs>
        <linearGradient id="opacity">
          <stop offset="0" stopColor="#e2dbe6" />
          <stop offset=".2" stopColor="#c9d8fc" />
          <stop offset=".38" stopColor="#9df5da" />
          <stop offset=".52" stopColor="#bffb86" />
          <stop offset=".66" stopColor="#ecdd72" />
          <stop offset=".78" stopColor="#f9a057" />
          <stop offset=".9" stopColor="#d5482a" />
          <stop offset="1" stopColor="#8c1a10" />
        </linearGradient>
        <linearGradient id="colors">
          <stop offset="0" stopColor="#30123b" />
          <stop offset=".13" stopColor="#3f51c4" />
          <stop offset=".26" stopColor="#3aa3f4" />
          <stop offset=".38" stopColor="#2fdfa5" />
          <stop offset=".52" stopColor="#9cf64a" />
          <stop offset=".66" stopColor="#e6d238" />
          <stop offset=".78" stopColor="#f98a29" />
          <stop offset=".9" stopColor="#cf3308" />
          <stop offset="1" stopColor="#7a0403" />
        </linearGradient>
      </defs>
      <path d="M4 62L149 5v65H4z" fill="url(#opacity)" />
      <path d="M4 62L149 5" stroke="#555" />
      <path d="M4 3v67" stroke="#98a0a5" strokeWidth="1.500" />
      <circle cx="3.500" cy="62.500" r="2" fill="#222038" stroke="#96967f" />
      <path d="M4 76h145v11H4z" fill="url(#colors)" />
      <path d="M4 81.500h145" stroke="#9c9d8b" strokeWidth="5" />
      <circle cx="4" cy="81.500" r="3" fill="#8f907d" />
    </svg>
  );
}

function Section({ title, className }: { title: string; className?: string }) {
  return <h3 className={clsx("h-[10px] shrink-0 border-b border-[#c9c9c9] font-bold leading-[9px]", className)}>{title}</h3>;
}

function ColorMapEditor() {
  const icon = "grid h-[11px] w-[11px] shrink-0 place-items-center rounded-xs border border-[#d2d2d2]";
  return (
    <aside className="flex w-[161px] shrink-0 flex-col">
      <PanelHeader title="Color Map Editor" />
      <div className="mt-[2px] flex gap-px pr-[2px] pl-[2px]">
        <input type="search" aria-label="Search color map settings" placeholder="Search ... (use Esc to clear text)" className="h-[11px] min-w-0 grow rounded-xs border border-[#c4c4c4] bg-white pl-px placeholder:text-[#999]" />
        <button aria-label="Advanced" className={icon}><Glyph name="gear" className="size-[6px]" /></button>
        <button aria-label="Color legend" className={clsx(icon, "bg-[#d5d5d5]")}><Glyph name="scalarBar" className="size-[7px]" /></button>
        <button aria-label="Separate color map" className={icon}><Glyph name="legendDark" className="size-[7px]" /></button>
      </div>
      <p className="mt-[2px] h-[10px] pl-[2px] leading-[10px]">Array Name: p</p>
      <div className="mt-[2px] flex h-[256px] shrink-0 pr-[3px] pl-[2px]">
        <div className="flex min-w-0 grow flex-col overflow-hidden">
          <div className="flex shrink-0 items-start">
            <span className="w-[54px] shrink-0 leading-[7px]">Automatic Rescale Range Mode</span>
            <Dropdown label="Automatic rescale range mode" value="Grow and update on 'Apply'" bare className="grow" />
          </div>
          <Check label="Interpret Values As Categories" className="h-[12px]" />
          <Check label="Rescale On Visibility Change" className="h-[11px]" />
          <Section title="Mapping Data" className="mt-[2px]" />
          <Dropdown label="Preset" value="Select a color map from default presets" bare className="mt-px shrink-0" />
          <OpacityEditor />
          <label className="mt-px flex shrink-0 items-center gap-[3px]">
            Data:
            <input type="text" className="h-[11px] min-w-0 grow rounded-l-xs border border-r-0 border-[#c9c9c9] bg-[#ededed]" />
          </label>
          <Check label="Enable Freehand Drawing Of Opacity Transfer Function" className="mt-px h-[12px]" />
          <Check label="Use Log Scale When Mapping Data To Colors" className="h-[12px]" />
          <Check label="Enable Opacity Mapping For Surfaces" className="h-[12px]" />
          <Check label="Use Log Scale When Mapping Data To Opacity" disabled className="h-[12px]" />
          <Section title="Data Histogram" />
          <Check label="Display Data Histogram" className="mt-px h-[12px]" />
          <Check label="Automatically recompute data histogram" disabled className="h-[12px]" />
          <div className="mt-[3px] flex shrink-0 items-center justify-between">
            Number of Bins
            <input aria-label="Number of bins" type="text" defaultValue="10" className="h-[11px] w-[42px] rounded-l-xs border border-[#c9c9c9] bg-white pl-[2px]" />
          </div>
        </div>
        <VScroll thumb="h-[172px]" />
      </div>
      <div className="px-[2px]"><HScroll /></div>
    </aside>
  );
}

/* ---------- host window chrome ---------- */

const virtualboxMark = (
  <>
    <rect width="20" height="20" rx="2" fill="#20242e" />
    <path d="M2 6l9-4 7 3-8 5zM2 18l8-8 8 2-8 6z" fill="#f39a31" />
    <path d="M1 3h6v5H1zM12 12h7v6h-7z" fill="#dfe6ee" />
    <path d="M3 17L17 3" stroke="#e5672b" strokeWidth="3" />
  </>
);

const vmStatus = [
  { name: "Hard disks", color: "#4aa6df", d: "M1 1h10v10H1z", mark: "M4 3h4v4H4zM3 9h6" },
  { name: "Optical", color: "#75cbea", d: "M6 0a6 6 0 1 1 0 12A6 6 0 0 1 6 0z", mark: "M5 5h2v2H5z" },
  { name: "Audio", color: "#8cc2de", d: "M1 1h5v10H1zM7 3l4-2v10L7 9z", mark: "M2 6h3" },
  { name: "Network", color: "#2876bd", d: "M3 1h9v6H3zM0 5h8v6H0z", mark: "M2 7h4" },
  { name: "USB", color: "#63b1dd", d: "M1 11l1-5 6-5 3 3-5 6z", mark: "M4 7l3-3" },
  { name: "Shared folders", color: "#cfd5da", d: "M1 2h4l1 1h5v8H1z", mark: "M2 5h8" },
  { name: "Display", color: "#3185cb", d: "M0 1h12v8H0zM3 10h6v2H3z", mark: "M3 3h6v4H3z" },
  { name: "Recording", color: "#3963c4", d: "M2 2h10v7H2zM0 4h8v7H0z", mark: "M2 6h4" },
  { name: "Processor", color: "#55a52d", d: "M0 0h12v12H0z", mark: "M3 3l6 6M9 3v6H3" },
  { name: "Mouse", color: "#59b88c", d: "M6 0l5 4-2 8-6-1-3-6z", mark: "M3 3l4 3v4" },
  { name: "Keyboard", color: "#3593d2", d: "M0 1h12v10H0z", mark: "M6 3v5M4 6l2 2 2-2" },
];

const pinnedApps: { name: string; running?: boolean; art: ReactNode }[] = [
  {
    name: "Chat",
    art: (
      <>
        <path d="M10 1a9 9 0 1 1-5 16l-4 2 1-6A9 9 0 0 1 10 1z" fill="#7268c9" />
        <path d="M5 7h7v7H5zM13 9l3-2v7l-3-2z" fill="#fff" />
      </>
    ),
  },
  {
    name: "File Explorer",
    art: (
      <>
        <path d="M0 2h7l2 2h11v14H0z" fill="#f0b92e" />
        <path d="M0 7h20v9H0z" fill="#fbd65b" />
        <path d="M3 13h14v5H3z" fill="#2474c5" />
      </>
    ),
  },
  {
    name: "Edge",
    art: (
      <>
        <circle cx="10" cy="10" r="9.500" fill="#1672bd" />
        <path d="M1 9C3-3 19-2 19.500 8c0 6-7 5-8 3 2-5-6-7-10.500-2z" fill="#43c7a3" />
        <path d="M7 10c-2 4 2 9 8 8-9 4-14-3-13-8 2-3 5-3 5 0z" fill="#2497dd" />
        <circle cx="11" cy="10.500" r="2.500" fill="#e8f4f6" />
      </>
    ),
  },
  {
    name: "Store",
    art: (
      <>
        <path d="M6 5V1h8v4" fill="none" stroke="#2c7db4" strokeWidth="2" />
        <path d="M1 4h18v13l-2 2H3l-2-2z" fill="#174f83" />
        <path d="M6 7h3.500v3.500H6z" fill="#f25b2e" />
        <path d="M10.500 7H14v3.500h-3.500z" fill="#80bb2c" />
        <path d="M6 11.500h3.500V15H6z" fill="#31a6e8" />
        <path d="M10.500 11.500H14V15h-3.500z" fill="#f9bb2d" />
      </>
    ),
  },
  { name: "Firefox", running: true, art: firefoxMark },
  {
    name: "VirtualBox",
    running: true,
    art: (
      <>
        <path d="M10 0l9 4v11l-9 5-9-5V4z" fill="#29435e" />
        <path d="M2 5l8 4 8-4-8-4z" fill="#9fb9d1" />
        <path d="M6 8l4 8 4-8M10 9v9" fill="none" stroke="#e6eff7" strokeWidth="1.500" />
      </>
    ),
  },
  { name: "VirtualBox VM", running: true, art: virtualboxMark },
];

function Taskbar() {
  return (
    <footer className="grid h-[25px] shrink-0 grid-cols-[1fr_auto_1fr] items-center border-t border-[#cfcfcf] bg-[#dcdcdb] text-[#333]">
      <button className="flex items-center gap-[5px] justify-self-start pl-[11px] text-left">
        <span className="size-[11px] rounded-full bg-linear-to-b from-[#f8a528] to-[#ef7218]" />
        <span className="leading-[8px]">
          19°C<br /><span className="text-[#666]">Sunny</span>
        </span>
      </button>
      <div className="flex items-center gap-[9px]">
        <button aria-label="Start" className="grid size-[13px] grid-cols-2 gap-px">
          {[0, 1, 2, 3].map((i) => <span key={i} className="bg-linear-to-br from-[#2fa8ea] to-[#0a74ce]" />)}
        </button>
        <label className="-ml-[2px] flex h-[16px] w-[114px] items-center gap-[5px] rounded-full bg-[#f5f5f5] pr-[2px] pl-[6px]">
          <svg viewBox="0 0 8 8" className="size-[8px] shrink-0">
            <path d="M5.500 5.500L7.500 7.500M3.500 1a2.500 2.500 0 1 1 0 5 2.500 2.500 0 0 1 0-5z" fill="none" stroke="#222" />
          </svg>
          <input type="text" placeholder="Search" className="min-w-0 grow text-[7px] outline-none placeholder:text-[#666]" />
          <svg viewBox="0 0 26 14" className="h-[14px] w-[26px] shrink-0">
            <path d="M3 11h20v2H3z" fill="#e8c79a" />
            <path d="M3 6l9-2 2 6-8 1z" fill="#eef2f4" stroke="#8aa" strokeWidth=".6" />
            <path d="M8 9l5-6" stroke="#f09a2a" strokeWidth="1.300" />
            <path d="M5 10h8v2H5z" fill="#5bb07a" />
            <rect x="16" y="2" width="7" height="11" rx="3" fill="#1f7fe0" />
            <path d="M17 8h5v4h-5z" fill="#1560b4" />
            <circle cx="1.500" cy="3" r="1" fill="#c76be0" />
            <circle cx="24.500" cy="3" r="1" fill="#f2a33a" />
          </svg>
        </label>
        <button aria-label="Task view">
          <svg viewBox="0 0 12 12" className="size-[12px]">
            <path d="M4 0h8v9H4z" fill="#fafafa" />
            <path d="M0 3h9v9H0z" fill="#242424" />
            <path d="M4 3h5v5H4z" fill="#9a9a9a" />
          </svg>
        </button>
        {pinnedApps.map((app) => (
          <button key={app.name} aria-label={app.name} className="relative w-[14px]">
            <svg viewBox="0 0 20 20" className="mx-auto block size-[13px]">{app.art}</svg>
            {app.running && <span className="absolute -bottom-[3px] left-1/2 h-px w-[3px] -translate-x-1/2 bg-[#777]" />}
          </button>
        ))}
      </div>
      <div className="flex items-center justify-self-end pr-[10px]">
        <svg viewBox="0 0 8 6" className="h-[5px] w-[7px]"><path d="M1 5l3-4 3 4" fill="none" stroke="#333" /></svg>
        <svg viewBox="0 0 12 12" className="ml-[8px] size-[10px]">
          <path d="M2 5c1-5 7-5 8-1M10 1v3H7M2 7v4h3" fill="none" stroke="#444" strokeWidth="1.300" />
          <circle cx="9" cy="9" r="3" fill="#ef8d25" />
        </svg>
        <span className="ml-[9px]">ENG</span>
        <svg viewBox="0 0 34 10" className="ml-[8px] h-[10px] w-[34px]">
          <path d="M0 4q4-4 8 0M1.500 5.500q2.500-2.500 5 0" fill="none" stroke="#333" strokeWidth="1.200" />
          <circle cx="4" cy="7.500" r="1" fill="#333" />
          <path d="M13 4h2l2-2v6l-2-2h-2zM18.500 3.500q1.500 1.500 0 3M20 2q2.500 3 0 6" fill="none" stroke="#333" strokeWidth=".8" />
          <path d="M26 3h7v5h-7z" fill="#222" />
          <path d="M33 4.500h1v2h-1zM26 1l2 3h-2z" fill="#222" />
        </svg>
        <span className="ml-[8px] text-right leading-[8px]">9:17<br />8/9/2023</span>
        <span className="ml-[4px] grid size-[9px] place-items-center rounded-full bg-[#0a6fce] text-[5px] text-white">1</span>
      </div>
    </footer>
  );
}

export default function App() {
  return (
    <div className="flex min-h-screen flex-col overflow-hidden bg-[#efefef] font-['Noto_Sans','Open_Sans',sans-serif] text-[6px] leading-[8px] text-[#2b2b2b]">
      <header className="flex h-[12px] shrink-0 items-center bg-[#f2f2f2] pl-px text-[#8b8b8b]">
        <svg viewBox="0 0 20 20" className="mr-[2px] size-[8px]">{virtualboxMark}</svg>
        Ubuntu-22.04.2 [Running] - Oracle VM VirtualBox
        <div className="ml-auto flex items-center gap-[18px] pr-[7px]">
          {["M1 4h6", "M1 3h4v4H1zM3 3V1h4v4H5", "M1 1l6 6M7 1L1 7"].map((d) => (
            <button key={d} aria-label="Window control">
              <svg viewBox="0 0 8 8" className="size-[6px]"><path d={d} fill="none" stroke="#888" /></svg>
            </button>
          ))}
        </div>
      </header>
      <div className="flex h-[9px] shrink-0 items-center gap-[7px] bg-white pl-[3px] text-[5px] text-[#a5a5a5]">
        {["File", "Machine", "View", "Input", "Devices", "Help"].map((m) => <button key={m}>{m}</button>)}
      </div>

      <div className="grid h-[12px] shrink-0 grid-cols-[1fr_auto_1fr] items-center border-b border-[#555] bg-[#131313] text-[#dedede]">
        <div className="flex items-center gap-[15px] pl-[8px]">
          <button>Activities</button>
          <button className="flex items-center gap-[4px]">
            <svg viewBox="0 0 8 8" className="size-[5px]"><path d="M1 7l2-6M3.500 7l2-6M6 7l2-6" stroke="#888" strokeWidth="1.200" /></svg>
            ParaView
          </button>
        </div>
        <button className="pl-[30px]">Aug 9&nbsp; 09:17</button>
        <div className="flex items-center gap-[6px] justify-self-end pr-[5px]">
          <svg viewBox="0 0 8 8" className="size-[6px]"><path d="M3 0h2v2H3zM0 5h2v3H0zM6 5h2v3H6zM1 5l3-3 3 3" fill="#ddd" stroke="#ddd" strokeWidth=".6" /></svg>
          <svg viewBox="0 0 8 8" className="size-[6px]"><path d="M0 2h2l3-2v8L2 6H0z" fill="#ddd" /><path d="M6 2q2 2 0 4" fill="none" stroke="#777" /></svg>
          <div className="relative size-[8px]">
            <svg viewBox="0 0 8 12" className="absolute top-0 left-0 z-10 h-[12px] w-[8px]">
              <path d="M3 0h4v4H3z" fill="#aaa" />
              <path d="M0 4h8v6H5l-2 2v-2H0z" fill="#45bdea" />
              <path d="M4 5v3M4 8.500v1" stroke="#fff" />
            </svg>
          </div>
        </div>
      </div>

      <div className="flex grow">
        <Dock />
        <div className="flex min-w-0 grow flex-col">
          <div className="grid h-[14px] shrink-0 grid-cols-[1fr_auto_1fr] items-center border-b border-[#cfcfcf] bg-[#eaeaea]">
            <h1 className="col-start-2 font-bold">ParaView 5.10.1</h1>
            <div className="flex gap-[5px] justify-self-end">
              {["M2 5h4", "M2 3h3v3H2zM4 2h2v2", "M2 2l4 4M6 2L2 6"].map((d) => (
                <button key={d} aria-label="Window control" className="grid size-[9px] place-items-center rounded-full bg-[#d2d2d2]">
                  <svg viewBox="0 0 8 8" className="size-[7px]"><path d={d} fill="none" stroke="#444" /></svg>
                </button>
              ))}
            </div>
          </div>
          <Toolbars />
          <div className="flex grow">
            <aside className="flex w-[122px] shrink-0 flex-col pl-[2px]">
              <PipelineBrowser />
              <PropertiesPanel />
            </aside>
            <div className="w-[2px] shrink-0" />
            <RenderView />
            <div className="w-[4px] shrink-0" />
            <ColorMapEditor />
          </div>
          <div className="mt-[2px] flex h-[10px] shrink-0 items-center border-t border-[#d2d2d2]">
            <div className="w-1/2" />
            <button aria-label="Abort" className="grid size-[7px] place-items-center rounded-xs border border-[#ccc] bg-[#fafafa]">
              <span className="size-[3px] bg-[#999]" />
            </button>
            <div className="ml-[2px] h-[7px] grow border border-r-0 border-[#d5d5d5]" />
          </div>
        </div>
      </div>

      <div className="flex h-[11px] shrink-0 items-center justify-end gap-px bg-[#f0f0f0] text-[5px]">
        {vmStatus.map((s) => (
          <svg key={s.name} viewBox="0 0 12 12" className="size-[9px]">
            <title>{s.name}</title>
            <path d={s.d} fill={s.color} />
            <path d={s.mark} fill="none" stroke="#eaf6fb" />
          </svg>
        ))}
        <span className="ml-px">Right Ctrl</span>
      </div>
      <Taskbar />
    </div>
  );
}
